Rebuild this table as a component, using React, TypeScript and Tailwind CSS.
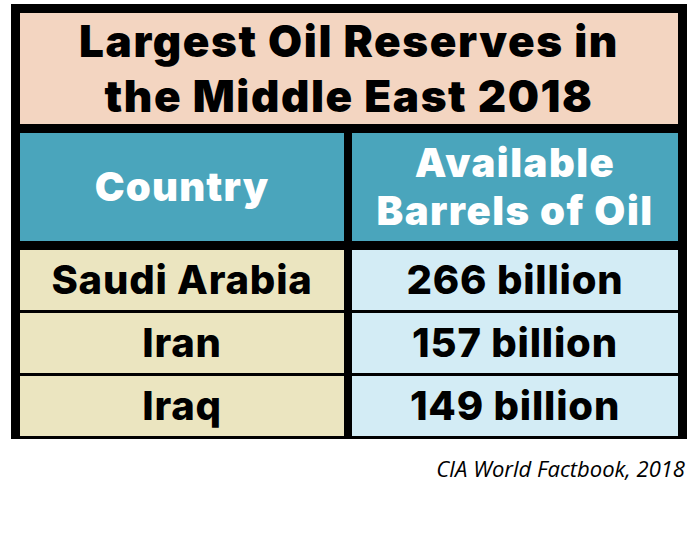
export default function App() {
  return (
    <div className="w-[697px] h-[558px] bg-white pt-[4px] pl-[11px]">
      <div className="w-[676px] bg-black p-[9px] flex flex-col gap-[9px] font-['Inter',sans-serif]">
        <div className="h-[111px] bg-[#f3d5c1] flex items-center justify-center text-center text-black font-black text-[44px] leading-[55px] tracking-[1.6px]">
          <h1>
            Largest Oil Reserves in
            <br />
            the Middle East 2018
          </h1>
        </div>
        <div className="grid grid-cols-[324px_1fr] gap-[8px] h-[108px]">
          <div className="bg-[#4aa5bc] flex items-center justify-center text-white font-black text-[40px] tracking-[1.2px]">
            Country
          </div>
          <div className="bg-[#4aa5bc] flex items-center justify-center text-center text-white font-black text-[40px] leading-[48px] tracking-[1.5px]">
            <p>
              Available
              <br />
              Barrels of Oil
            </p>
          </div>
        </div>
        {rows.map((row) => (
          <div key={row.country} className="grid grid-cols-[324px_1fr] gap-[8px] h-[54px]">
            <div className="bg-[#ebe5c0] flex items-center justify-center text-black font-extrabold text-[40px] tracking-[0.8px]">
              {row.country}
            </div>
            <div className="bg-[#d3ecf5] flex items-center justify-center text-black font-extrabold text-[40px] tracking-[0.8px]">
              {row.amount}
            </div>
          </div>
        ))}
      </div>
      <p className="w-[676px] text-right mt-[13px] pr-[2px] italic text-[22px] text-black font-['Open_Sans',sans-serif]">
        CIA World Factbook, 2018
      </p>
    </div>
  );
}

const rows = [
  { country: "Saudi Arabia", amount: "266 billion" },
  { country: "Iran", amount: "157 billion" },
  { country: "Iraq", amount: "149 billion" },
];
